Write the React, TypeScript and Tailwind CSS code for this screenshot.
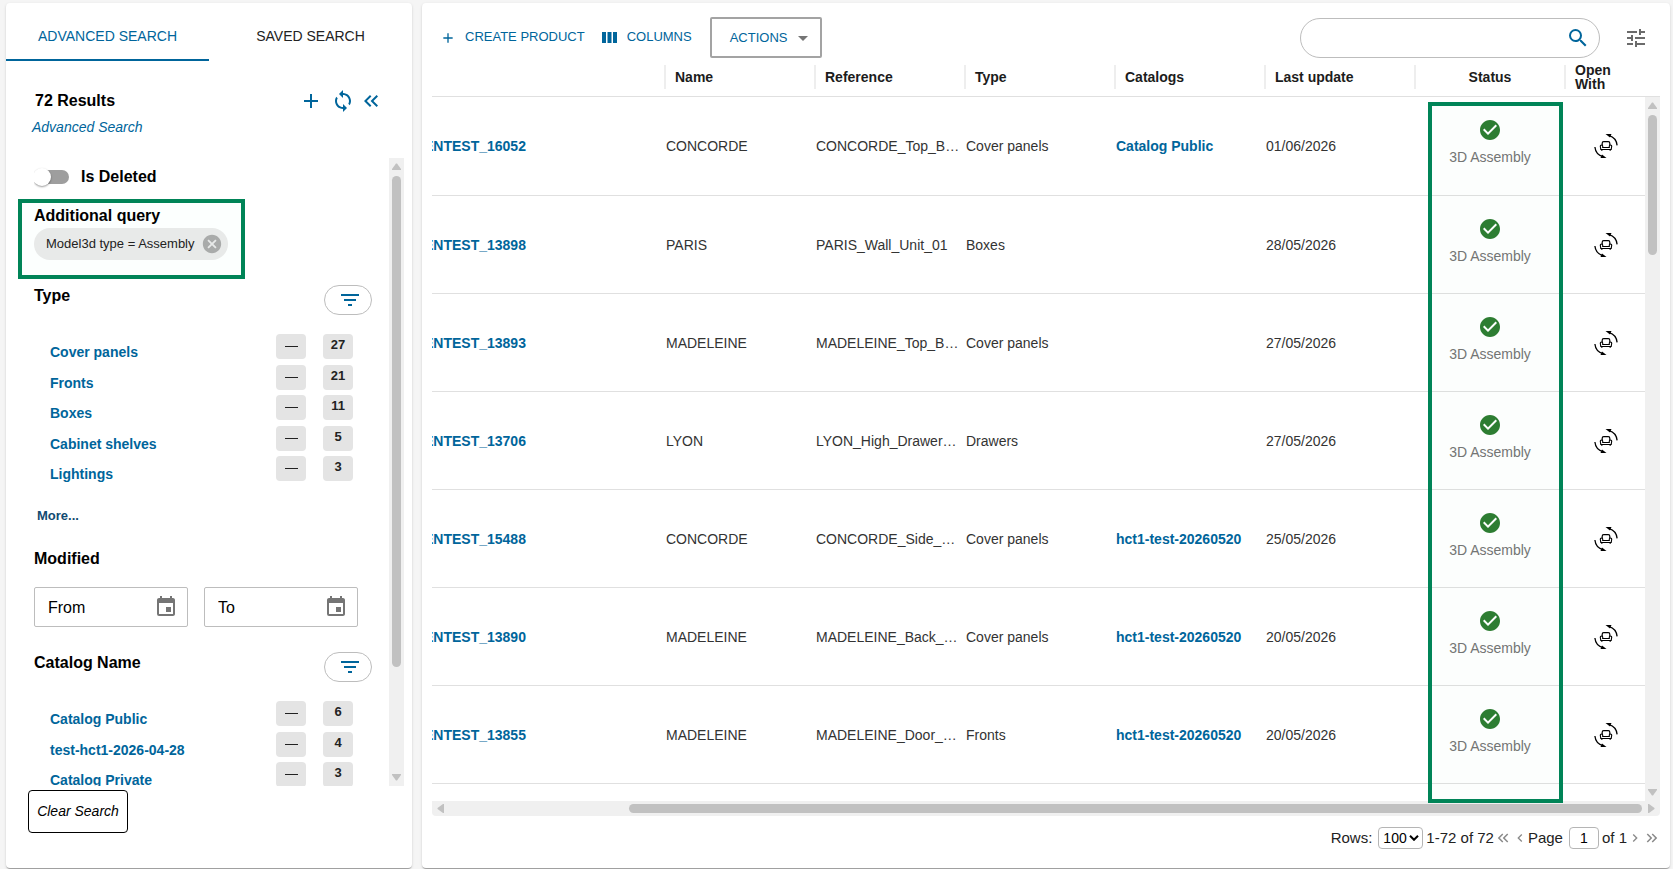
import React from "react";
import {
  MdAdd,
  MdArrowDropDown,
  MdCancel,
  MdCheckCircle,
  MdEvent,
  MdFilterList,
  MdKeyboardArrowLeft,
  MdKeyboardArrowRight,
  MdKeyboardDoubleArrowLeft,
  MdKeyboardDoubleArrowRight,
  MdSearch,
  MdSync,
  MdTune,
} from "react-icons/md";

type Facet = { label: string; count: number };

type Product = {
  id: string;
  name: string;
  reference: string;
  type: string;
  catalog?: string;
  updated: string;
};

const typeFacets: Facet[] = [
  { label: "Cover panels", count: 27 },
  { label: "Fronts", count: 21 },
  { label: "Boxes", count: 11 },
  { label: "Cabinet shelves", count: 5 },
  { label: "Lightings", count: 3 },
];

const catalogFacets: Facet[] = [
  { label: "Catalog Public", count: 6 },
  { label: "test-hct1-2026-04-28", count: 4 },
  { label: "Catalog Private", count: 3 },
];

const products: Product[] = [
  { id: "ENTEST_16052", name: "CONCORDE", reference: "CONCORDE_Top_B…", type: "Cover panels", catalog: "Catalog Public", updated: "01/06/2026" },
  { id: "ENTEST_13898", name: "PARIS", reference: "PARIS_Wall_Unit_01", type: "Boxes", updated: "28/05/2026" },
  { id: "ENTEST_13893", name: "MADELEINE", reference: "MADELEINE_Top_B…", type: "Cover panels", updated: "27/05/2026" },
  { id: "ENTEST_13706", name: "LYON", reference: "LYON_High_Drawer…", type: "Drawers", updated: "27/05/2026" },
  { id: "ENTEST_15488", name: "CONCORDE", reference: "CONCORDE_Side_…", type: "Cover panels", catalog: "hct1-test-20260520", updated: "25/05/2026" },
  { id: "ENTEST_13890", name: "MADELEINE", reference: "MADELEINE_Back_…", type: "Cover panels", catalog: "hct1-test-20260520", updated: "20/05/2026" },
  { id: "ENTEST_13855", name: "MADELEINE", reference: "MADELEINE_Door_…", type: "Fronts", catalog: "hct1-test-20260520", updated: "20/05/2026" },
];

const panelClass =
  "bg-white rounded-[4px] shadow-[0_2px_1px_-1px_rgba(0,0,0,0.2),0_1px_1px_0_rgba(0,0,0,0.14),0_1px_3px_0_rgba(0,0,0,0.12)]";

function Triangle({ className }: { className: string }) {
  return (
    <svg viewBox="0 0 9 7" className={`h-[7px] w-[9px] shrink-0 fill-[#c1c1c1] ${className}`} aria-hidden="true">
      <path d="M4 .5h1L9 6v1H0V6z" />
    </svg>
  );
}

function VerticalScrollbar({ thumb }: { thumb: string }) {
  return (
    <div className="flex w-[15px] min-h-0 flex-1 flex-col items-center bg-[#f0f0f0] py-[5px]" aria-hidden="true">
      <Triangle className="" />
      <div className="my-[6px] w-[9px] flex-1">
        <div className={`w-full rounded-full bg-[#c1c1c1] ${thumb}`} />
      </div>
      <Triangle className="rotate-180" />
    </div>
  );
}

function ViewIn3dIcon() {
  return (
    <svg viewBox="0 0 24 24" className="size-6" fill="none" stroke="#000" aria-hidden="true">
      <path d="M15 1.700c4.200 1.200 7.600 4.800 8.100 9.700" strokeWidth="1.300" />
      <path d="M11.500 0h6l-1.500 3.500z" fill="#000" stroke="none" />
      <path d="M.9 13c.5 4.900 3.900 8.500 8.100 9.700" strokeWidth="1.300" />
      <path d="M12.500 24h-6L8 20.500z" fill="#000" stroke="none" />
      <path d="M8.200 11.500v-2.300q0-1.500 1.500-1.500h4.600q1.500 0 1.500 1.500v2.300" strokeWidth="1.200" />
      <path d="M8.700 13.500h6.600v-1.400q0-1.100 1.200-1.100t1.200 1.100l-.5 3.400H6.800l-.5-3.400q0-1.100 1.200-1.100t1.200 1.100z" strokeWidth="1.100" />
      <path d="M7.800 15.500v1.300M16.200 15.500v1.300" strokeWidth="1.300" />
    </svg>
  );
}

function FilterButton({ label }: { label: string }) {
  return (
    <button type="button" aria-label={label} className="flex h-[30px] w-12 items-center justify-center rounded-full border border-[#bdbdbd] pl-1 text-[#00659b]">
      <MdFilterList className="size-6" />
    </button>
  );
}

function FacetList({ items, className }: { items: Facet[]; className: string }) {
  return (
    <ul className={`mr-[36px] ml-4 flex flex-col justify-between ${className}`}>
      {items.map((item) => (
        <li key={item.label} className="flex h-[25px] items-start">
          <a href="#" className="flex-1 pt-2 text-sm leading-[20px] font-bold text-[#00659b]">
            {item.label}
          </a>
          <button type="button" aria-label={`Exclude ${item.label}`} className="mr-[17px] flex h-[25px] w-[30px] items-center justify-center rounded-[4px] bg-[#e4e4e4]">
            <span className="h-px w-[13px] bg-[#222]" />
          </button>
          <span className="h-[25px] w-[30px] rounded-[4px] bg-[#e4e4e4] text-center text-[13px] leading-[22px] font-bold text-[#222]">
            {item.count}
          </span>
        </li>
      ))}
    </ul>
  );
}

function DateField({ label }: { label: string }) {
  return (
    <div className="flex h-10 w-[154px] items-center rounded-[2px] border border-[#bdbdbd] pr-[9px] pl-[13px]">
      <input aria-label={label} placeholder={label} className="w-full min-w-0 pt-0.5 text-base text-black outline-none placeholder:text-black" />
      <button type="button" aria-label={`Pick ${label} date`} className="text-[#757575]">
        <MdEvent className="size-6" />
      </button>
    </div>
  );
}

function SearchPanel() {
  return (
    <aside className={`flex w-[406px] shrink-0 flex-col ${panelClass}`}>
      <div role="tablist" className="flex h-[58px] shrink-0 text-sm">
        <button type="button" role="tab" aria-selected="true" className="flex-1 border-b-2 border-[#00659b] pt-[10px] text-[#00659b]">
          ADVANCED SEARCH
        </button>
        <button type="button" role="tab" aria-selected="false" className="flex-1 border-b-2 border-transparent pt-[10px] text-[#222]">
          SAVED SEARCH
        </button>
      </div>

      <div className="mt-[28px] flex items-center pr-[29px] pl-[29px]">
        <h2 className="flex-1 text-base leading-6 font-bold text-black">72 Results</h2>
        <div className="flex items-center text-[#00659b]">
          <button type="button" aria-label="Add"><MdAdd className="size-6" /></button>
          <button type="button" aria-label="Refresh" className="ml-2"><MdSync className="size-6" /></button>
          <button type="button" aria-label="Collapse" className="ml-1"><MdKeyboardDoubleArrowLeft className="size-6" /></button>
        </div>
      </div>
      <a href="#" className="mt-1 ml-[26px] text-sm leading-5 text-[#00659b] italic">Advanced Search</a>

      <div className="mt-[21px] mr-2 flex h-[628px] min-h-0 shrink pl-[12px]">
        <div className="min-w-0 flex-1 overflow-hidden">
          <label className="ml-4 flex h-[38px] items-center overflow-hidden">
            <input type="checkbox" role="switch" className="peer sr-only" />
            <span className="flex h-5 w-[35px] items-center">
              <span className="h-[14px] w-full rounded-full bg-[#9e9e9e]">
                <span className="-mt-[2px] -ml-[1px] block size-[18px] rounded-full bg-white shadow-[0_1px_2px_rgba(0,0,0,0.4)]" />
              </span>
            </span>
            <span className="ml-3 text-base font-bold text-black">Is Deleted</span>
          </label>

          <section className="mt-[3px] h-20 w-[227px] border-4 border-[#008457] bg-[#fcfffe] pt-[2px] pl-[12px]">
            <h3 className="text-base leading-[21px] font-bold text-black">Additional query</h3>
            <div className="mt-[2px] inline-flex h-8 items-center rounded-full bg-[#e8eae9] pr-[5px] pl-3 text-[13px] text-[#222]">
              <span className="mr-[6px]">Model3d type = Assembly</span>
              <button type="button" aria-label="Remove query" className="text-[#a9abaa]"><MdCancel className="size-[22px]" /></button>
            </div>
          </section>

          <section className="pl-4">
            <div className="mt-[6px] mr-[17px] flex items-center justify-between">
              <h3 className="pb-2 text-base leading-5 font-bold text-black">Type</h3>
              <FilterButton label="Filter types" />
            </div>
            <FacetList items={typeFacets} className="mt-[19px] h-[147px]" />
            <a href="#" className="mt-[25px] ml-[3px] block text-[13px] leading-5 font-bold text-[#114a70]">More...</a>
          </section>

          <section className="pl-4">
            <h3 className="mt-[23px] text-base leading-5 font-bold text-black">Modified</h3>
            <div className="mt-[18px] flex gap-4">
              <DateField label="From" />
              <DateField label="To" />
            </div>
          </section>

          <section className="pl-4">
            <div className="mt-[25px] mr-[17px] flex items-center justify-between">
              <h3 className="pb-2 text-base leading-5 font-bold text-black">Catalog Name</h3>
              <FilterButton label="Filter catalogs" />
            </div>
            <FacetList items={catalogFacets} className="mt-[19px] h-[86px]" />
          </section>
        </div>
        <div className="flex flex-col">
          <VerticalScrollbar thumb="h-[83%]" />
        </div>
      </div>

      <button type="button" className="mt-1 ml-[22px] h-[43px] w-[100px] shrink-0 rounded-[4px] border border-black pb-0.5 text-sm text-black italic">
        Clear Search
      </button>
    </aside>
  );
}

function Toolbar() {
  return (
    <div className="flex h-[58px] shrink-0 items-center pt-[11px] pr-[22px] pl-[18px] text-[13px] text-[#00659b]">
      <button type="button" className="flex items-center">
        <MdAdd className="size-4" />
        <span className="ml-[9px] pb-0.5">CREATE PRODUCT</span>
      </button>
      <button type="button" className="ml-[17px] flex items-center">
        <svg viewBox="0 0 15 11" className="h-[11px] w-[15px] fill-current" aria-hidden="true">
          <path d="M0 0h4v11H0zM5.500 0h4v11h-4zM11 0h4v11h-4z" />
        </svg>
        <span className="ml-[10px] pb-0.5">COLUMNS</span>
      </button>
      <button type="button" className="ml-[18px] flex h-[41px] w-[112px] items-center rounded-[2px] border-2 border-[#a3a3a3] pl-[18px]">
        <span>ACTIONS</span>
        <MdArrowDropDown className="ml-1 size-6 text-[#757575]" />
      </button>
      <div className="ml-auto flex h-10 w-[300px] items-center rounded-full border border-[#bdbdbd] pr-[9px] pl-4">
        <input type="search" aria-label="Search products" className="w-full min-w-0 text-sm text-black outline-none" />
        <button type="button" aria-label="Search"><MdSearch className="size-6" /></button>
      </div>
      <button type="button" aria-label="Settings" className="ml-6 text-[#6b6b6b]"><MdTune className="size-6" /></button>
    </div>
  );
}

const headClass = "h-[36px] border-b border-[#e0e0e0] p-0 pb-[3px] align-middle";
const headInner = "flex h-6 items-center border-l-2 border-[#eeeeee] pl-[9px]";
const cellClass = "border-b border-[#e0e0e0] p-0 pl-[2px] whitespace-nowrap";

function ProductTable() {
  return (
    <div className="relative mr-[10px] ml-[10px] flex min-h-0 flex-1 flex-col">
      <div className="flex min-h-0 flex-1">
        <div className="min-w-0 flex-1 overflow-hidden">
          <table className="-ml-2 w-[calc(100%+8px)] table-fixed border-separate border-spacing-0 text-left text-sm text-[#333]">
            <colgroup>
              <col />
              <col className="w-[150px]" />
              <col className="w-[150px]" />
              <col className="w-[150px]" />
              <col className="w-[150px]" />
              <col className="w-[150px]" />
              <col className="w-[150px]" />
              <col className="w-[81px]" />
            </colgroup>
            <thead className="text-[#1c1c1c]">
              <tr>
                <th className={headClass} aria-label="Identifier" />
                {["Name", "Reference", "Type", "Catalogs", "Last update"].map((title) => (
                  <th key={title} scope="col" className={headClass}>
                    <div className={headInner}>{title}</div>
                  </th>
                ))}
                <th scope="col" className={headClass}>
                  <div className="flex h-6 items-center justify-center border-l-2 border-[#eeeeee]">Status</div>
                </th>
                <th scope="col" className={headClass}>
                  <div className={`${headInner} leading-[14px]`}>Open<br />With</div>
                </th>
              </tr>
            </thead>
            <tbody>
              {products.map((p) => (
                <tr key={p.id} className="h-[98px] first:h-[99px]">
                  <td className="border-b border-[#e0e0e0] p-0">
                    <a href="#" className="font-bold text-[#00659b]">{p.id}</a>
                  </td>
                  <td className={cellClass}>{p.name}</td>
                  <td className={cellClass}>{p.reference}</td>
                  <td className={cellClass}>{p.type}</td>
                  <td className={cellClass}>
                    {p.catalog && <a href="#" className="font-bold text-[#00659b]">{p.catalog}</a>}
                  </td>
                  <td className={cellClass}>{p.updated}</td>
                  <td className="border-b border-[#e0e0e0] p-0 pb-[7px] pl-[2px] text-[#757575]">
                    <div className="flex flex-col items-center gap-[5px]">
                      <MdCheckCircle className="size-6 text-[#2e7d32]" />
                      <span>3D Assembly</span>
                    </div>
                  </td>
                  <td className="border-b border-[#e0e0e0] p-0 pl-[3px]">
                    <button type="button" aria-label="Open 3D view" className="mx-auto flex">
                      <ViewIn3dIcon />
                    </button>
                  </td>
                </tr>
              ))}
            </tbody>
          </table>
        </div>
        <div className="flex flex-col">
          <div className="h-[36px] shrink-0 border-b border-[#e0e0e0]" />
          <VerticalScrollbar thumb="h-[21%]" />
        </div>
      </div>
      <div className="flex h-[15px] shrink-0 items-center rounded-b-[4px] bg-[#f0f0f0] px-1" aria-hidden="true">
        <Triangle className="-rotate-90" />
        <div className="mx-[5px] flex h-[9px] flex-1 justify-end">
          <div className="w-[85%] rounded-full bg-[#c1c1c1]" />
        </div>
        <Triangle className="rotate-90" />
      </div>
      <div className="pointer-events-none absolute top-[41px] right-[97px] bottom-[13px] w-[135px] border-4 border-[#008457] bg-[#00a060]/[0.01]" />
    </div>
  );
}

function Pagination() {
  return (
    <div className="flex h-[52px] shrink-0 items-start justify-end pt-[11px] pr-[9px] text-[15px] leading-[22px] text-[#222]">
      <label htmlFor="rows" className="mr-[6px]">Rows:</label>
      <div className="relative mr-[3px] h-[22px] w-[45px]">
        <select id="rows" defaultValue="100" className="block size-full appearance-none rounded-[4px] border border-[#b5b5b5] bg-white pl-1 text-sm leading-5 text-black">
          <option>100</option>
        </select>
        <svg viewBox="0 0 10 6" className="pointer-events-none absolute top-2 right-1 h-[6px] w-[10px] fill-none stroke-black" strokeWidth="2" aria-hidden="true">
          <path d="M1 .8l4 4 4-4" />
        </svg>
      </div>
      <span>1-72 of 72</span>
      <button type="button" aria-label="First page" className="h-[22px] text-[#8a8a8a]"><MdKeyboardDoubleArrowLeft className="size-[18px]" /></button>
      <button type="button" aria-label="Previous page" className="h-[22px] text-[#8a8a8a]"><MdKeyboardArrowLeft className="size-4" /></button>
      <label htmlFor="page" className="mr-[6px]">Page</label>
      <input id="page" defaultValue="1" className="mr-[3px] h-[22px] w-[30px] rounded-[4px] border border-[#b5b5b5] text-center text-sm text-black outline-none" />
      <span>of 1</span>
      <button type="button" aria-label="Next page" className="h-[22px] text-[#8a8a8a]"><MdKeyboardArrowRight className="size-4" /></button>
      <button type="button" aria-label="Last page" className="h-[22px] text-[#8a8a8a]"><MdKeyboardDoubleArrowRight className="size-[18px]" /></button>
    </div>
  );
}

export default function App() {
  return (
    <div className="flex h-screen gap-[10px] bg-[#f5f5f5] pt-[3px] pr-[3px] pb-px pl-[6px] font-['Liberation_Sans',Arial,sans-serif]">
      <SearchPanel />
      <main className={`flex min-w-0 flex-1 flex-col ${panelClass}`}>
        <Toolbar />
        <ProductTable />
        <Pagination />
      </main>
    </div>
  );
}
